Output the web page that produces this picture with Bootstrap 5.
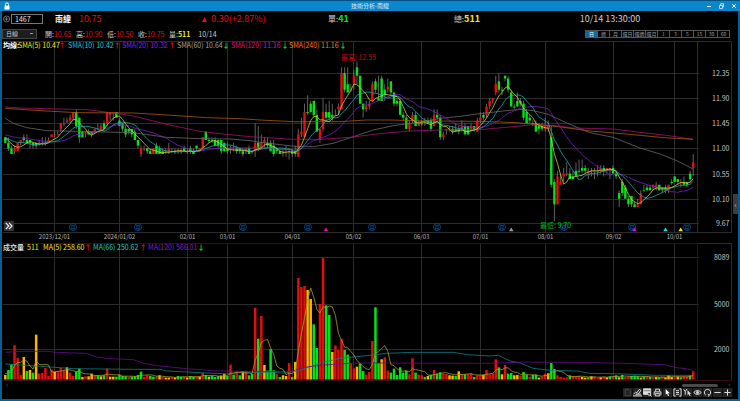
<!DOCTYPE html>
<html lang="zh-Hant">
<head>
<meta charset="utf-8">
<meta name="viewport" content="width=device-width, initial-scale=1">
<title>技術分析-南緯</title>
<link href="https://cdn.jsdelivr.net/npm/bootstrap@5.3.0/dist/css/bootstrap.min.css" rel="stylesheet">
<style>
  :root { --edge: #075f95; --up: #e01010; --down: #00e51a; --flat: #fb0; }
  body { background: #000; color: #ccc; font-family: "Noto Sans CJK TC", "Noto Sans", sans-serif; font-size: 7px; line-height: 10px; }
  .app-window { border: 2px solid var(--edge); border-top: 0; min-height: 100vh; }
  .title-bar { background: #0a87cc; border-top: 1px solid #04507f; height: 11px; margin: 0 -2px; color: #d5ecfa; font-size: 6px; }
  .title-bar .side { width: 64px; }
  .plain-btn { background: none; border: 0; padding: 0; color: inherit; line-height: 1; display: flex; }
  .quote-row { height: 16px; font-size: 9px; }
  .quote-row .cjk { font-size: 8px; }
  .w-symbol { width: 27.2%; }
  .w-quote { width: 17.1%; }
  .code-box { width: 32px; height: 10px; background: #000; border: 1px solid #777; color: #e4e4e4; font-size: 7px; padding: 0 3px; line-height: 8px; }
  .option-row { height: 13px; }
  .period-select { width: 35px; height: 10px; min-height: 0; padding: 0 3px; border: 1px solid #444; border-radius: 0; color: #ccc; font-size: 6px; line-height: 8px; background: #1c1e20 linear-gradient(#999, #999) no-repeat right 3px center / 3px 1px; }
  .ohlc { width: 31px; white-space: nowrap; }
  .up { color: var(--up); }
  .down { color: var(--down); }
  .yel { color: #f2e62a; }
  .period-btn { width: 12px; height: 8px; background: #050505; border: 1px solid #555; margin-left: -1px; width: 13px; padding: 0; color: #999; font-size: 5px; line-height: 6px; white-space: nowrap; overflow: hidden; }
  .period-btn.active { background: #0b6ba5; color: #fff; }
  .chart { display: block; width: 100%; height: auto; }
  .chart text { font-size: 7px; fill: #c4c4c4; }
  .chart .date { font-size: 6px; text-anchor: middle; fill: #bbb; }
  .chart .axis { text-anchor: end; }
  .chart .arrow { text-anchor: middle; font-weight: 700; }
  .chart .month { font-size: 5px; text-anchor: middle; fill: #0a64b4; }
  .grid-line { stroke: #2c2c2c; fill: none; }
  .avg { fill: none; stroke-width: 2.4; }
  .avg-fine { fill: none; stroke-width: .8; }
  .scroll-row { height: 6px; color: #777; font-size: 6px; line-height: 6px; }
  .scroll-thumb { width: 36px; height: 3px; background: #4a4a4a; border-radius: 2px; margin-right: 10px; }
  .tool-row { height: 10px; margin-right: 5px; }
  .tool-btn { width: 10px; height: 9px; background: #242424; border: 0; padding: 0; display: flex; justify-content: center; align-items: center; border-right: 1px solid #0c0c0c; }
  .tool-btn svg { width: 9px; height: 9px; fill: none; stroke: #ddd; stroke-width: 1.1; }
  .side-handle { position: absolute; right: 0; top: 194px; width: 5px; height: 20px; background: #3b3d3f; border: 0; padding: 0; color: #ccc; font-size: 7px; line-height: 18px; }
</style>
<script src="https://cdn.jsdelivr.net/npm/bootstrap@5.3.0/dist/js/bootstrap.bundle.min.js"></script>
</head>
<body>
<main class="app-window position-relative">
  <header class="title-bar d-flex justify-content-between align-items-center">
    <div class="side ps-1 d-flex">
      <svg width="6" height="8" viewBox="0 0 6 8" aria-hidden="true"><path d="M1.5 4V2.4a1.5 1.5 0 0 1 3 0V4" fill="none" stroke="#fff"/><path d="M.5 3.6h5V7.5h-5z" fill="#fff"/></svg>
    </div>
    <span>技術分析-南緯</span>
    <div class="side d-flex justify-content-end gap-2 pe-1">
      <button class="plain-btn" aria-label="最小化"><svg width="4" height="6" viewBox="0 0 4 6"><path d="M0 3.5h4" stroke="#fff"/></svg></button>
      <button class="plain-btn" aria-label="還原"><svg width="5" height="6" viewBox="0 0 5 6" fill="none" stroke="#d7eefb" stroke-width=".8"><path d="M.5 2.5h3v3h-3zM1.7 2.3V.7h2.8v3.2h-.9"/></svg></button>
      <button class="plain-btn" aria-label="關閉"><svg width="4" height="6" viewBox="0 0 4 6"><path d="M.3 1.3l3.4 3.4M3.7 1.3L.3 4.7" stroke="#fff"/></svg></button>
    </div>
  </header>

  <section class="quote-row d-flex align-items-center">
    <div class="w-symbol d-flex align-items-center">
      <button class="plain-btn ms-0 px-0" aria-label="新增"><svg width="9" height="8" viewBox="0 0 9 8" fill="none" stroke="#888" stroke-width=".8"><circle cx="4.6" cy="4" r="3"/><path d="M2.8 4h3.6M4.6 2.2v3.6"/></svg></button>
      <input class="code-box" aria-label="股票代號" value="1467">
      <b class="cjk text-light ms-2 ps-1">南緯</b>
      <span class="up ms-1 ps-1">10.75</span>
    </div>
    <div class="w-quote up d-flex align-items-center gap-1"><svg width="5" height="5" viewBox="0 0 5 5" aria-hidden="true"><path d="M2.5 0L5 5H0z" fill="#e01010"/></svg><span class="ms-n1">0.30(+2.87%)</span></div>
    <div class="w-quote"><span class="cjk">單:</span><b class="down fw-semibold">41</b></div>
    <div class="w-quote"><span class="cjk">總:</span><b class="yel">511</b></div>
    <div>10/14 13:30:00</div>
  </section>

  <section class="option-row d-flex align-items-center">
    <select class="form-select period-select ms-0" aria-label="週期"><option>日線</option></select>
    <div class="d-flex ps-1 ms-1 flex-grow-1">
      <span class="ohlc">開:<span class="up">10.65</span></span>
      <span class="ohlc">高:<span class="up">10.90</span></span>
      <span class="ohlc">低:<span class="up">10.50</span></span>
      <span class="ohlc">收:<span class="up">10.75</span></span>
      <span>量:<b class="yel">511</b></span>
      <span class="ps-1 ms-1">10/14</span>
    </div>
    <div class="d-flex pe-1 me-1" role="group" aria-label="K線週期">
      <button class="period-btn active">日</button><button class="period-btn">週</button><button class="period-btn">月</button><button class="period-btn">還日</button><button class="period-btn">還週</button><button class="period-btn">還月</button><button class="period-btn">1</button><button class="period-btn">3</button><button class="period-btn">5</button><button class="period-btn">15</button><button class="period-btn">30</button><button class="period-btn">60</button>
    </div>
  </section>

  <svg class="chart" viewBox="2 40 736 342" role="img" aria-label="南緯日K線與成交量">
    <g class="grid-line" id="grid"></g>
    <path d="M3 243.5H697M697.5 243V380M3 380.5H731" stroke="#3a0a18" fill="none"/>
    <g id="volume"></g>
    <g id="candles"></g>
    <g transform="scale(.3333333)">
      <polyline class="avg" stroke="#686868" points="16,355 40,370 80,383 140,392 230,394 400,398 500,412 600,416 690,417 750,422 780,427 840,434 895,440 940,440 1000,430 1060,410 1120,390 1180,377 1250,368 1320,355 1380,349 1440,341 1510,333 1560,328 1600,332 1645,343 1700,369 1770,398 1839,412 1920,444 1980,462 2030,482 2079,507"/>
      <polyline class="avg" stroke="#a3126f" points="16,321 60,324 260,329 340,339 400,348 500,373 600,394 680,403 750,410 800,413 880,418 960,418 1050,412 1140,401 1230,393 1320,390 1440,389 1530,381 1600,374 1670,377 1720,384 1839,387 1920,397 2000,406 2079,418"/>
      <polyline class="avg" stroke="#a85a0e" points="16,325 120,332 230,338 400,339 500,345 620,353 720,356 780,360 880,365 1020,365 1100,360 1170,360 1280,363 1440,364 1550,368 1620,374 1690,382 1770,393 1890,403 1990,413 2079,418"/>
      <polyline class="avg" stroke="#0c8088" points="16,1092 80,1096 150,1101 220,1106 400,1108 480,1108 500,1113 600,1118 690,1122 720,1117 800,1117 850,1119 895,1113 930,1100 970,1087 1020,1075 1080,1069 1120,1065 1160,1060 1240,1057 1360,1057 1400,1064 1470,1068 1495,1066 1530,1083 1560,1089 1600,1105 1650,1111 1730,1113 1770,1120 1870,1122 1970,1126 2070,1126"/>
      <polyline class="avg" stroke="#650f86" points="16,1057 60,1054 140,1054 170,1057 260,1060 290,1071 330,1076 400,1079 430,1090 480,1098 560,1106 640,1112 720,1114 780,1114 870,1115 920,1101 970,1095 1050,1090 1120,1089 1470,1090 1570,1086 1730,1087 1870,1090 1990,1094 2030,1103 2070,1108 2079,1113"/>
    </g>
    <g id="averages"></g>
    <g id="labels"></g>

    <text x="3" y="48" style="fill:#fff;font-weight:700">均線:</text>
    <text x="3" y="250" style="fill:#eee;font-weight:500">成交量</text>
    <text x="341" y="60" style="fill:#c00c0c">最高: 12.55</text>
    <text x="540" y="228" style="fill:#00b818">最低: 9.70</text>

    <path fill="#d21a9a" d="M326 227.5l2.3 3.8h-4.6z"/>
    <path fill="#999" d="M511.300 227.500l2.300 3.800h-4.600z"/>
    <path fill="#c01ae0" d="M634.500 227.500l2.300 3.800h-4.600z"/>
    <path fill="#30d5e0" d="M665.500 227.500l2.300 3.800h-4.600z"/>
    <path fill="#f0e030" d="M680.700 227.500l2.300 3.800h-4.600z"/>

    <path fill="#303234" d="M4 221h10v10H4z"/>
    <path d="M5.800 222.800l3 3.200-3 3.200M9 222.800l3 3.200-3 3.200" fill="none" stroke="#f0f0f0" stroke-width="1.200"/>
  </svg>

  <div class="scroll-row d-flex align-items-center px-1">
    <span class="flex-grow-1">‹</span><span class="scroll-thumb"></span><span class="pe-1">›</span>
  </div>
  <div class="tool-row d-flex justify-content-end align-items-start">
    <button class="tool-btn" aria-label="文件"><svg viewBox="0 0 10 10" style="stroke:#444"><path d="M2.500 1.500h4l1.500 1.500v5.500h-5.500z"/></svg></button>
    <button class="tool-btn" aria-label="畫線"><svg viewBox="0 0 10 10"><path d="M0 8.800h10M1 7C2 4 4 4 4.500 6.500M4 5.500L7 1.500l1.800 1.300-3 4H8.800M3 7h3"/></svg></button>
    <button class="tool-btn" aria-label="查詢"><svg viewBox="0 0 10 10"><path d="M.5 1h8v6h-8z" fill="#ddd"/><path d="M.5 3h8" stroke="#777"/><circle cx="6.800" cy="6.500" r="1.600" fill="#242424"/><path d="M8 7.800l1.500 1.700"/></svg></button>
    <button class="tool-btn" aria-label="列印"><svg viewBox="0 0 10 10"><path d="M3 4V1.300h4.200V4M1.300 7.500V4.300h7.500v3.200M2.600 6.300h5v2.500h-5z"/></svg></button>
    <button class="tool-btn" aria-label="游標"><svg viewBox="0 0 10 10"><path d="M3 1l4.500 4.700H5.600l1.100 2.800-1.100.4-1.100-2.800L3 7.400z" fill="#fff" stroke="none"/></svg></button>
    <button class="tool-btn" aria-label="資料"><svg viewBox="0 0 10 10"><path d="M3 1H1v8h2M7 1h2v8H7M3.300 3h3.400M3.300 5h3.400M3.300 7h3.400"/></svg></button>
    <button class="tool-btn" aria-label="指標"><svg viewBox="0 0 10 10"><path d="M.8 1.500L2.500 4 4.500 1M2.500 4v3.500"/><path d="M5 2.500l4 3.800H7.500l.9 2.200-1 .4-.9-2.200L5 8z" fill="#ddd" stroke="none"/></svg></button>
    <button class="tool-btn" aria-label="顯示"><svg viewBox="0 0 10 10"><path d="M.8 5Q5 .6 9.200 5 5 9.400.8 5z"/><circle cx="5" cy="5" r="1.200" fill="#ddd"/></svg></button>
    <button class="tool-btn" aria-label="重新整理"><svg viewBox="0 0 10 10"><path d="M3.200 8A3.500 3.500 0 1 1 6.800 8M5.300 6.600L7 8.100 5.400 9.500"/></svg></button>
    <button class="tool-btn" aria-label="縮小"><svg viewBox="0 0 10 10"><path d="M1.500 5h7"/></svg></button>
    <button class="tool-btn" aria-label="放大"><svg viewBox="0 0 10 10"><path d="M1.500 5h7M5 1.500v7"/></svg></button>
  </div>
  <button class="side-handle" aria-label="展開側欄">‹</button>
</main>

<script>
  // Daily bars: colour, open, close, high, low; prices are in 0.05 steps above 10.00.
  const bars = `g24,22,24,22 g22,20,24,19 g20,18,21,18 r19,20,21,18 r19,22,22,19 r22,23,23,21 g24,23,25,22 g23,22,25,22 g23,22,23,20 g22,21,22,20
g22,21,22,20 r22,22,23,21 r22,22,24,21 r22,22,24,21 r22,23,24,22 r24,25,25,24 r25,25,26,24 r25,25,26,25 r27,29,29,26 r29,29,31,28
r30,30,31,29 r30,31,32,29 r31,33,33,30 g33,28,34,27 g31,24,31,22 g26,24,26,24 r26,26,26,24 g26,25,27,25 g26,25,26,24 r26,27,27,25
r27,27,29,27 r27,28,29,27 g29,27,30,27 r29,33,33,28 r32,33,33,30 r33,33,33,30 g33,31,33,31 g30,28,31,28 g29,27,29,26 g27,25,28,24
g27,26,27,25 g27,25,27,24 g26,23,27,23 g23,21,23,20 r18,20,21,17 r20,20,21,19 g20,19,20,18 g19,18,20,18 r18,20,20,18 g21,18,22,18
g20,18,21,18 g19,18,20,18 r19,19,20,18 r19,20,22,18 g19,19,20,19 g19,19,20,18 r19,19,20,18 g19,19,20,18 g20,19,21,19 r19,19,20,18
g20,19,21,18 g19,18,20,18 g21,20,21,19 r19,20,20,19 r20,24,24,20 g26,23,26,23 g23,23,24,22 g23,23,24,22 g23,21,24,21 g23,21,23,20
g23,19,23,18 g22,19,22,19 g20,19,22,18 r20,20,21,18 r20,20,22,19 g20,19,21,18 g20,19,20,18 g19,18,20,17 r19,20,20,18 g20,18,21,18
r19,19,19,18 r19,22,29,17 g22,20,28,19 r20,22,25,20 r22,23,24,20 g22,21,24,20 g22,19,23,19 g21,18,23,17 g20,19,20,18 g19,18,20,18
r18,19,20,17 r19,19,21,17 r19,19,20,16 g19,18,20,17 g19,18,21,17 r17,25,27,17 r25,26,31,24 r24,33,36,24 g33,33,39,32 g36,33,37,33
g37,32,37,31 g32,26,34,26 r23,27,27,22 r27,33,38,26 g33,31,36,30 g33,31,37,30 g32,31,36,30 r32,32,34,32 r34,35,36,32 r34,47,49,34
g47,41,49,40 g43,40,49,40 r41,41,43,40 r43,46,48,41 g49,46,51,43 g46,36,46,36 g36,34,36,31 r34,35,37,33 r35,36,37,34 r37,43,44,37
g44,41,45,40 g38,37,46,37 g45,37,46,37 g41,39,43,37 r41,42,45,40 g44,40,44,39 g40,36,40,35 g37,36,38,35 g37,32,38,32 g32,31,33,30
g31,27,32,27 r27,29,30,26 r30,32,33,29 g32,28,33,28 r28,29,30,28 g29,29,30,28 r29,29,31,28 g30,29,31,29 g30,27,31,26 r28,32,34,28
g32,31,34,30 g31,24,32,23 r24,25,26,23 r27,27,27,25 r27,27,28,26 g27,26,28,25 g27,26,29,26 g27,26,28,25 r27,28,30,26 g28,25,29,25
g28,25,28,25 r27,28,29,26 g28,27,28,26 r26,30,31,26 r30,31,33,29 g32,31,33,30 r32,35,36,31 r35,37,38,34 r37,38,38,36 r40,43,46,39
g44,41,47,40 g41,41,42,39 g46,45,46,44 g45,41,46,40 g40,35,41,35 g35,35,36,34 g37,35,40,35 g37,36,38,35 g36,31,37,30 g33,29,34,29
g31,30,32,29 g29,29,30,28 g29,26,30,26 g28,27,29,25 g28,27,29,26 r27,28,31,26 r27,28,30,26 g24,7,28,6 g8,0,9,-6 r0,10,12,0
r7,8,11,7 r10,11,13,8 r11,11,15,10 g11,9,13,9 g10,9,12,9 g12,10,15,10 g12,12,16,11 g13,12,16,11 g13,12,14,11 r11,12,13,9
r12,12,13,10 r12,12,13,9 r12,12,14,10 r12,13,14,11 g13,12,14,10 r12,13,13,11 r12,13,13,9 g13,11,14,11 g11,10,12,9 g4,2,5,-1
g8,4,9,3 g6,2,7,2 g2,0,3,-1 g3,0,3,-1 g0,-1,1,-1 r-1,0,2,-1 r0,4,5,0 g5,5,7,5 g6,5,7,5 g6,5,7,5
r6,7,7,5 r6,7,8,5 g7,5,7,5 g6,5,6,4 g6,5,7,4 r5,7,7,4 g8,8,9,7 g10,8,10,8 g9,8,9,7 r8,8,9,6
g8,7,10,7 g8,7,8,6 g11,9,12,8 r13,15,18,10`.split(/\s+/).map(s => [s[0], ...s.slice(1).split(',').map(Number)]);

  // Traded volume, 22 lots per unit.
  const volumes = `y13 g28 g45 r102 r65 r13 y67 g25 y28 g20 y134 r17 r19 r34 r11 r29 y22 r25 r34 r27 y36 r20 r10 g23 g32 y7 r9 y9 y17 r12
g12 y9 g12 r32 y8 y8 g8 g13 g10 g9 r7 g8 g9 g13 g23 r8 r12 g10 g8 r8 y12 r7 y5 y5 r6 y5 g10 g8 r8 y5
g10 g8 r8 y8 r19 g13 y8 g10 g7 g10 y11 y16 g10 r44 g14 r22 g12 y22 r25 g12 g16 r215 g122 r190 y43 g26 g90 g27 r15 g7
y12 y10 r49 g7 y52 r304 r277 r280 y268 y241 g165 g94 r226 r364 g222 g193 y82 r101 r88 r121 g88 g74 r48 r33 y38 g47 g25 r14 r22 r115
g216 g49 y60 r66 r26 g20 g32 g13 g36 g20 g26 r15 r63 g20 r14 r12 g7 y10 g14 r28 g17 g21 r17 r16 y12 y11 g10 y24 r15 g15
r15 r17 g7 r12 r13 y14 r28 r15 r18 r60 g36 y15 r43 g17 g19 y12 y13 r11 g22 g13 r8 g13 g13 y5 r8 r17 y18 g49 g31 r12
r7 r5 r6 g12 r10 r8 r10 y7 y5 g6 y9 r8 r4 y6 r8 y6 g9 r10 g12 y6 g13 r7 r9 g10 g10 g9 y5 g8 r9 g7
r5 y7 g6 r8 y6 y12 y7 r6 y8 g6 r9 r8 g12 r24`.split(/\s+/).map(s => [s[0], +s.slice(1)]);

  const ink = { r: '#e01010', g: '#00e51a', y: '#ffb400' };
  const barX = i => 5.3 + i * 3.0848;
  const priceY = t => 148.4 - (t - 20) * 2.795;
  const volumeY = v => 379.3 - v / 3;
  const put = (id, html) => document.getElementById(id).insertAdjacentHTML('beforeend', html);

  const months = [[16,'2023/12/01'],[37,'2024/01/02'],[59,'02/01'],[72,'03/01'],[93,'04/01'],[113,'05/02'],[135,'06/03'],[154,'07/01'],[175,'08/01'],[197,'09/02'],[217,'10/01']];
  const prices = [[73,'12.35'],[98,'11.90'],[123,'11.45'],[148,'11.00'],[174,'10.55'],[199,'10.10'],[223,'9.67'],[257,'8089'],[304,'5000'],[349,'2000']];
  let grid = 'M3 41.5H731.5V232.5H3M731.5 243V380.5M697.5 41V232.500M697 243.500H731';
  months.forEach(([i, label]) => {
    const x = Math.floor(barX(i)) + .5;
    grid += `M${x} 41V232M${x} 243V380`;
    put('labels', `<text class="date" x="${x}" y="239">${label}</text>`);
  });
  prices.forEach(([y, label]) => {
    grid += `M3 ${y + .5}H699`;
    put('labels', `<text class="axis" x="729.5" y="${y + 3}">${label}</text>`);
  });
  put('grid', `<path d="${grid}"/>`);

  put('volume', volumes.map(([c, v], i) => `<path d="M${barX(i)} 379.500V${volumeY(v)}" stroke="${ink[c]}" stroke-width="2.500"/>`).join(''));

  put('candles', bars.map(([c, open, close, high, low], i) => {
    const top = priceY(Math.max(open, close)), bottom = Math.max(priceY(Math.min(open, close)), top + 1);
    return `<path d="M${barX(i)} ${priceY(high)}V${priceY(low)}" stroke="#8a8a8a" stroke-width=".7"/><path d="M${barX(i)} ${top}V${bottom}" stroke="${ink[c]}" stroke-width="2.400"/>`;
  }).join(''));

  // Simple moving average with a flat lead-in before the first bar.
  const average = (values, n, lead, toY, color) => {
    const all = [...Array(n - 1).fill(lead), ...values];
    const pts = values.map((_, i) => `${barX(i)},${toY(all.slice(i, i + n).reduce((a, b) => a + b) / n)}`);
    put('averages', `<polyline class="avg-fine" stroke="${color}" points="${pts.join(' ')}"/>`);
  };
  const closes = bars.map(b => b[2]);
  average(closes, 20, 25, priceY, '#7a1fc0');
  average(closes, 10, 24, priceY, '#18a9b4');
  average(closes, 5, 24, priceY, '#d4c93c');
  average(volumes.map(v => v[1]), 5, 18, volumeY, '#a89c22');

  const legend = [
    [18,48,'SMA(5) 10.47','#f2e62a',62,1],[68,48,'SMA(10) 10.42','#1fc8d2',117,1],[122,48,'SMA(20) 10.32','#8a22d8',172,1],
    [177,48,'SMA(60) 10.64','#a0a0a0',226,0],[231,48,'SMA(120) 11.16','#d6188f',285,0],[289,48,'SMA(240) 11.16','#f07f14',343,0],
    [27,250,'511','#f2e62a'],[43,250,'MA(5) 258.60','#f2e62a',88,1],[93,250,'MA(66) 250.62','#1fc8d2',143,1],[148,250,'MA(120) 566.01','#8a1fb8',201,0]];
  legend.forEach(([x, y, label, color, ax, rising]) => {
    put('labels', `<text x="${x}" y="${y}" style="fill:${color}">${label}</text>`);
    if (ax) put('labels', `<text class="arrow" x="${ax}" y="${y}" style="fill:${rising ? ink.r : ink.g}">${rising ? '↑' : '↓'}</text>`);
  });

  [73, 138, 243, 308, 372, 437, 502, 564, 632, 687].forEach(x =>
    put('labels', `<circle cx="${x}" cy="227" r="3.500" fill="none" stroke="#074a86" stroke-width=".9"/><text class="month" x="${x}" y="229">月</text>`));
</script>
</body>
</html>
